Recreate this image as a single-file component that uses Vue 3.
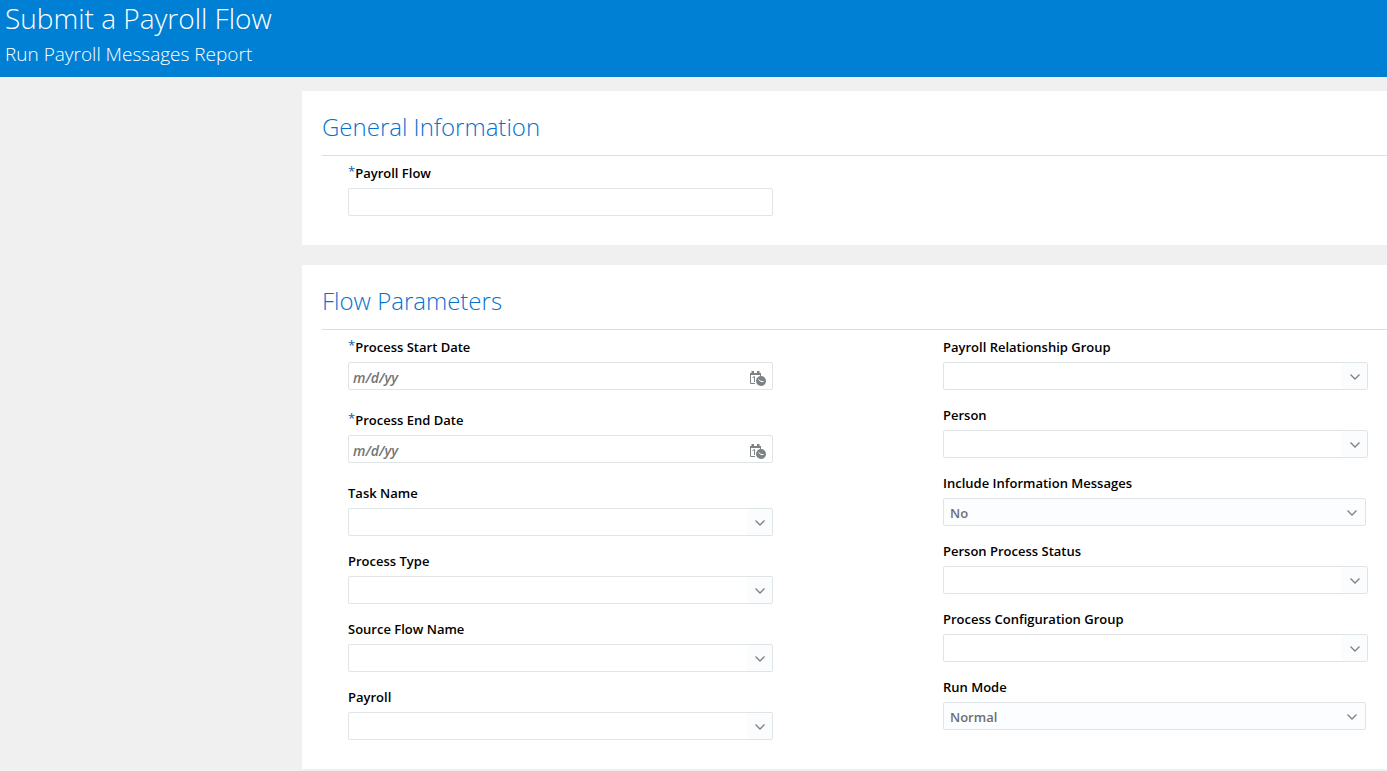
<script setup>
import { reactive } from 'vue'

const leftFields = [
  { id: 'start-date', label: 'Process Start Date', type: 'date', required: true },
  { id: 'end-date', label: 'Process End Date', type: 'date', required: true },
  { id: 'task-name', label: 'Task Name', type: 'combo' },
  { id: 'process-type', label: 'Process Type', type: 'combo' },
  { id: 'source-flow', label: 'Source Flow Name', type: 'combo' },
  { id: 'payroll', label: 'Payroll', type: 'combo' },
]
const rightFields = [
  { id: 'relationship-group', label: 'Payroll Relationship Group', type: 'combo' },
  { id: 'person', label: 'Person', type: 'combo' },
  { id: 'include-messages', label: 'Include Information Messages', type: 'select', options: ['No', 'Yes'] },
  { id: 'person-status', label: 'Person Process Status', type: 'combo' },
  { id: 'configuration-group', label: 'Process Configuration Group', type: 'combo' },
  { id: 'run-mode', label: 'Run Mode', type: 'select', options: ['Normal'] },
]
const columns = [leftFields, rightFields]
const values = reactive({ 'payroll-flow': '', 'include-messages': 'No', 'run-mode': 'Normal' })
</script>

<template>
  <div class="page">
    <header class="banner">
      <h1>Submit a Payroll Flow</h1>
      <p>Run Payroll Messages Report</p>
    </header>

    <main class="content">
      <section class="panel">
        <h2>General Information</h2>
        <div class="columns">
          <div class="column">
            <div class="field">
              <label for="payroll-flow"><span class="required">*</span>Payroll Flow</label>
              <div class="control">
                <input id="payroll-flow" v-model="values['payroll-flow']" type="text" required />
              </div>
            </div>
          </div>
        </div>
      </section>

      <section class="panel">
        <h2>Flow Parameters</h2>
        <div class="columns">
          <div v-for="(column, index) in columns" :key="index" class="column">
            <div v-for="field in column" :key="field.id" class="field" :class="field.type">
              <label :for="field.id"><span v-if="field.required" class="required">*</span>{{ field.label }}</label>
              <div class="control">
                <select v-if="field.type === 'select'" :id="field.id" v-model="values[field.id]">
                  <option v-for="option in field.options" :key="option">{{ option }}</option>
                </select>
                <input
                  v-else
                  :id="field.id"
                  v-model="values[field.id]"
                  type="text"
                  :placeholder="field.type === 'date' ? 'm/d/yy' : null"
                />
                <button v-if="field.type === 'date'" type="button" :aria-label="'Select ' + field.label">
                  <svg width="18" height="16" viewBox="0 0 18 16" fill="none">
                    <path d="M6 13.5H1.5V3.5H11.5V6" stroke="#7d8286" />
                    <path d="M1 3H12V5H1zM2.5 1H5V3H2.5zM8 1H10.5V3H8z" fill="#7d8286" />
                    <path d="M3.5 7.5L5.5 6.5V12" stroke="#7d8286" />
                    <circle cx="12" cy="11" r="5" fill="#7d8286" />
                    <path d="M9.5 9.5L12 11.5H14.5" stroke="#fff" />
                  </svg>
                </button>
                <button v-else-if="field.type === 'combo'" type="button" :aria-label="'Open ' + field.label">
                  <svg width="12" height="8" viewBox="0 0 12 8" fill="none">
                    <path d="M1.5 1.5L6 6L10.5 1.5" stroke="#7d8286" stroke-width="1.3" />
                  </svg>
                </button>
                <svg v-else class="chevron" width="12" height="8" viewBox="0 0 12 8" fill="none" aria-hidden="true">
                  <path d="M1.5 1.5L6 6L10.5 1.5" stroke="#7d8286" stroke-width="1.3" />
                </svg>
              </div>
            </div>
          </div>
        </div>
      </section>
    </main>
  </div>
</template>

<style>
body {
  background: #f0f0f0;
}
</style>

<style scoped>
.page {
  font-family: "Open Sans", "Noto Sans", sans-serif;
  color: #000;
}
.page *,
.page {
  box-sizing: border-box;
}
.banner {
  background: #0080d4;
  color: #fff;
  padding: 0 5px 9px;
}
.banner h1 {
  margin: 0;
  font-size: 28px;
  font-weight: 300;
  line-height: 36px;
}
.banner p {
  margin: 0;
  padding-top: 4px;
  font-size: 19px;
  font-weight: 300;
  line-height: 28px;
}
.content {
  display: flex;
  flex-direction: column;
  gap: 20px;
  margin: 14px 0 2px 302px;
}
.panel {
  background: #fff;
  padding: 0 0 29px 20px;
}
.panel h2 {
  margin: 0 0 7px;
  padding: 16px 0 8px;
  border-bottom: 1px solid #d6dfe6;
  color: #0572ce;
  font-size: 24px;
  font-weight: 300;
  line-height: 40px;
}
.columns {
  display: grid;
  grid-template-columns: 595fr 444fr;
  padding-left: 26px;
}
.column {
  display: flex;
  flex-direction: column;
  gap: 15px;
}
.field {
  width: 425px;
}
.field.date {
  padding-bottom: 5px;
}
.field.select {
  width: 423px;
}
label {
  display: block;
  margin-bottom: 5px;
  font-size: 13px;
  font-weight: 600;
  line-height: 20px;
}
.required {
  color: #0b5fb0;
  font-weight: 400;
  line-height: 1;
  vertical-align: 2px;
}
.control {
  position: relative;
  display: flex;
  height: 28px;
  border: 1px solid #dfe4e7;
  border-radius: 2px;
  background: #fff;
}
.select .control {
  background: #fcfdfe;
}
input,
select {
  flex: 1;
  min-width: 0;
  padding: 2px 5px 0;
  border: 0;
  outline: 0;
  background: transparent;
  color: #6b6f72;
  font: 600 13px "Open Sans", "Noto Sans", sans-serif;
}
input {
  padding-left: 4px;
  font-size: 14px;
}
input::placeholder {
  color: #757575;
  font-style: italic;
  opacity: 1;
}
select {
  appearance: none;
  padding-left: 6px;
}
button {
  display: flex;
  align-items: center;
  justify-content: center;
  width: 25px;
  padding: 1px 0 0;
  border: 0;
  background: #fafcfe;
}
.date button {
  width: 28px;
  padding-top: 3px;
  background: transparent;
}
.chevron {
  position: absolute;
  top: 10px;
  right: 7px;
  pointer-events: none;
}
</style>
